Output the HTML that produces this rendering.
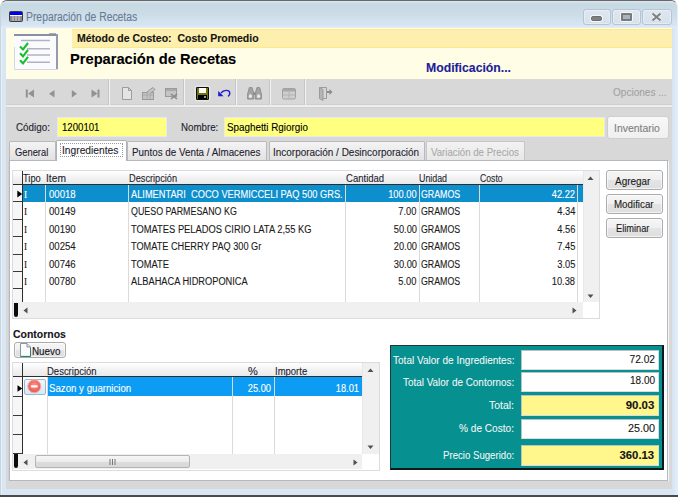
<!DOCTYPE html>
<html><head><meta charset="utf-8">
<style>
*{box-sizing:border-box;margin:0;padding:0}
html,body{width:678px;height:497px;overflow:hidden;background:#fff}
body{position:relative;font-family:"Liberation Sans",sans-serif;font-size:10px;color:#000}
.a{position:absolute}
</style></head><body>
<div class="a" style="left:0;top:0;width:678px;height:497px;background:#d9e7f4;border-radius:7px 7px 0 0;border-top:1px solid #686868;border-left:1px solid #c8d3de;border-right:1px solid #e4eff9"></div>
<div class="a" style="left:1px;top:1px;width:676px;height:27px;border-radius:6px 6px 0 0;background:linear-gradient(#dae6ee,#c6d8e2 12%,#cddde8 50%,#d8e6f3 92%,#e6eef4)"></div>
<div class="a" style="left:1px;top:28px;width:1px;height:467px;background:#e8f0f8"></div>
<div class="a" style="left:672px;top:28px;width:5px;height:467px;background:linear-gradient(90deg,#d6e5f2,#e0ecf8)"></div>
<div class="a" style="left:0px;top:495px;width:678px;height:2px;background:#4a4a4a"></div>
<svg class="a" style="left:8px;top:10px" width="16" height="13" viewBox="0 0 16 13"><rect x="1.5" y="1.5" width="13" height="10" rx="1" fill="#8a8a8a" stroke="#3c3c3c"/><rect x="2" y="2" width="12" height="3" fill="#0000f0"/><rect x="2" y="5" width="12" height="1" fill="#fff"/><path d="M5 6v5M8 6v5M11 6v5" stroke="#d0d0d0"/></svg>
<div class="a" style="left:26.34px;top:11px;font:normal 12.5px/1 'Liberation Sans',sans-serif;color:#667a93;white-space:pre;-webkit-text-stroke:0.1px #667a93;transform:scaleX(0.829);transform-origin:0 0;">Preparación de Recetas</div>
<div class="a" style="left:583px;top:9px;width:28px;height:16px;border:1px solid #b6c3d2;border-radius:3px;background:linear-gradient(#dde7f2,#d6e1ec);box-shadow:inset 0 0 0 1px rgba(255,255,255,.35)"></div>
<div class="a" style="left:612px;top:9px;width:29px;height:16px;border:1px solid #b6c3d2;border-radius:3px;background:linear-gradient(#dde7f2,#d6e1ec);box-shadow:inset 0 0 0 1px rgba(255,255,255,.35)"></div>
<div class="a" style="left:642px;top:9px;width:30px;height:16px;border:1px solid #b6c3d2;border-radius:3px;background:linear-gradient(#dde7f2,#d6e1ec);box-shadow:inset 0 0 0 1px rgba(255,255,255,.35)"></div>
<div class="a" style="left:591px;top:16px;width:11px;height:5px;background:#808080;border-radius:2px;border:1px solid #6e6e6e;box-shadow:0 0 0 1px rgba(255,255,255,.7)"></div>
<div class="a" style="left:621px;top:13px;width:11px;height:8px;border:2px solid #7a7a7a;border-radius:1px;background:#a9b4c2;box-shadow:0 0 0 1px rgba(255,255,255,.7)"></div>
<svg class="a" style="left:650px;top:12px" width="13" height="10" viewBox="0 0 13 10"><path d="M2.5 1.5L10.5 8.5M10.5 1.5L2.5 8.5" stroke="#fff" stroke-opacity=".7" stroke-width="3.6"/><path d="M2.5 1.5L10.5 8.5M10.5 1.5L2.5 8.5" stroke="#808080" stroke-width="2.2"/></svg>
<div class="a" style="left:6px;top:28px;width:666px;height:461px;background:#d8d8d8"></div>
<div class="a" style="left:6px;top:28px;width:666px;height:51px;background:#fffde6"></div>
<div class="a" style="left:72px;top:29px;width:600px;height:19px;background:#fdefad;border-top:1px solid #fde98c;border-bottom:1px solid #fde98c"></div>
<div class="a" style="left:77.03px;top:33px;font:bold 10.5px/1 'Liberation Sans',sans-serif;color:#141414;white-space:pre;-webkit-text-stroke:0.1px #141414;transform:scaleX(1.001);transform-origin:0 0;">Método de Costeo:&nbsp; Costo Promedio</div>
<div class="a" style="left:70.09px;top:51px;font:bold 15.5px/1 'Liberation Sans',sans-serif;color:#000;white-space:pre;-webkit-text-stroke:0.1px #000;transform:scaleX(0.946);transform-origin:0 0;">Preparación de Recetas</div>
<div class="a" style="left:426.37px;top:62px;font:bold 12.5px/1 'Liberation Sans',sans-serif;color:#20209a;white-space:pre;-webkit-text-stroke:0.1px #20209a;transform:scaleX(0.979);transform-origin:0 0;">Modificación...</div>
<svg class="a" style="left:14px;top:33px" width="45" height="37" viewBox="0 0 45 37">
<rect x="0" y="1" width="44" height="36" fill="#fbfbfd"/>
<path d="M0.5 14v22.5h43" fill="none" stroke="#d4d6de"/>
<rect x="0" y="1" width="44" height="2" fill="#8990a2"/>
<rect x="35" y="0" width="7" height="1" fill="#a8aebc"/>
<rect x="42" y="1" width="2" height="35" fill="#959cae"/>
<path d="M7 7.6h29M13 15.8h23M13 22h23M13 29.3h23" stroke="#b2b2c6" stroke-width="1.5"/>
<path d="M6 13.5l3 3 5-6.5M6 20.3l3 3 5-6.5M6 27.3l3 3 5-6.5" stroke="#16c02a" stroke-width="2.1" fill="none"/>
</svg>
<div class="a" style="left:6px;top:79px;width:666px;height:25px;background:#d8d8d8"></div>
<div class="a" style="left:6px;top:104px;width:666px;height:1px;background:#cfcfcf"></div>
<div class="a" style="left:6px;top:105px;width:666px;height:2px;background:#eeeeee"></div>
<div class="a" style="left:6px;top:107px;width:666px;height:1px;background:#d2d2d2"></div>
<div class="a" style="left:108px;top:79px;width:1px;height:26px;background:#c6c6c6"></div>
<div class="a" style="left:109px;top:79px;width:1px;height:26px;background:#f2f2f2"></div>
<div class="a" style="left:183px;top:79px;width:1px;height:26px;background:#c6c6c6"></div>
<div class="a" style="left:184px;top:79px;width:1px;height:26px;background:#f2f2f2"></div>
<div class="a" style="left:235px;top:79px;width:1px;height:26px;background:#c6c6c6"></div>
<div class="a" style="left:236px;top:79px;width:1px;height:26px;background:#f2f2f2"></div>
<div class="a" style="left:269px;top:79px;width:1px;height:26px;background:#c6c6c6"></div>
<div class="a" style="left:270px;top:79px;width:1px;height:26px;background:#f2f2f2"></div>
<div class="a" style="left:304px;top:79px;width:1px;height:26px;background:#c6c6c6"></div>
<div class="a" style="left:305px;top:79px;width:1px;height:26px;background:#f2f2f2"></div>
<div class="a" style="left:613.45px;top:88px;font:normal 10px/1 'Liberation Sans',sans-serif;color:#a2a2a2;white-space:pre;-webkit-text-stroke:0.1px #a2a2a2;transform:scaleX(1.005);transform-origin:0 0;">Opciones ...</div>
<svg class="a" style="left:24px;top:88px" width="80" height="11" viewBox="0 0 80 11"><g fill="#929292">
<rect x="1.8" y="1.5" width="2" height="8"/><path d="M10 1.5v8L4 5.5z"/>
<path d="M30.5 2v7.5L25 5.75z"/>
<path d="M47.8 2v7.5L53 5.75z"/>
<path d="M67.5 1.5v8L73.5 5.5z"/><rect x="73.5" y="1.5" width="2" height="8"/></g></svg>
<svg class="a" style="left:120px;top:86px" width="62" height="15" viewBox="0 0 62 15">
<path d="M2.5 1.5h6l3 3v9h-9z" fill="#e4e4e4" stroke="#9c9c9c"/><path d="M8.5 1.5v3h3" fill="none" stroke="#9c9c9c"/>
<rect x="22.5" y="6.5" width="11" height="7" fill="#c4c4c4" stroke="#9a9a9a"/><path d="M23 9h10M27 7v6M30 7v6" stroke="#aaa"/><path d="M27 6l6-4.5 2 2-5 4" fill="#c8c8c8" stroke="#959595"/>
<rect x="45.5" y="2.5" width="11" height="8" fill="#c4c4c4" stroke="#9a9a9a"/><rect x="46" y="3" width="10" height="2" fill="#aaa"/><path d="M51 8l6 5M57 8l-6 5" stroke="#8a8a8a" stroke-width="1.6"/>
</svg>
<svg class="a" style="left:194px;top:85px" width="17" height="17" viewBox="0 0 17 17">
<rect x="0.5" y="0.5" width="16" height="16" rx="3" fill="#ececec" opacity=".7"/>
<rect x="2" y="2" width="13" height="13" rx="1.2" fill="#0c0c0c"/><rect x="3" y="3" width="11" height="11" fill="#74740c"/>
<rect x="5" y="3" width="7" height="5" fill="#fff"/><rect x="4" y="10" width="9" height="4" fill="#000"/><rect x="10" y="11" width="2" height="2" fill="#9a9a9a"/></svg>
<svg class="a" style="left:217px;top:88px" width="15" height="10" viewBox="0 0 15 10">
<path d="M4 5C6.5 1.8 12.3 1.3 12.8 5c0.2 1.8-0.8 2.8-1.8 3.3" stroke="#1b1bd0" stroke-width="1.4" fill="none"/><path d="M1.2 3L6.5 8.2H1.2z" fill="#1b1bd0"/></svg>
<svg class="a" style="left:247px;top:87px" width="15" height="13" viewBox="0 0 15 13">
<g fill="#a4a4a4" stroke="#858585" stroke-width="0.8">
<path d="M2.3 0.6h2.8l1.6 5.6v5.9H0.6V7z"/><path d="M12.7 0.6H9.9L8.3 6.2v5.9h6.1V7z"/></g>
<rect x="6.5" y="5.5" width="2" height="2.5" fill="#8a8a8a"/>
<ellipse cx="3.4" cy="9.2" rx="1.6" ry="1.9" fill="#e8e8e8"/><ellipse cx="11.6" cy="9.2" rx="1.6" ry="1.9" fill="#e8e8e8"/>
</svg>
<svg class="a" style="left:281px;top:87px" width="16" height="13" viewBox="0 0 16 13">
<rect x="1.5" y="1.5" width="13" height="10.5" rx="1.5" fill="#cecece" stroke="#a2a2a2"/><rect x="2" y="2" width="12" height="2.5" fill="#a8a8a8"/><path d="M8 5v6.5M2 8h12" stroke="#b4b4b4"/></svg>
<svg class="a" style="left:317px;top:86px" width="17" height="15" viewBox="0 0 17 15">
<path d="M2.5 1.5h7v11h-7z" fill="#d6d6d6" stroke="#9c9c9c"/><path d="M2.5 1.5l3.5 2v11l-3.5-2z" fill="#b4b4b4" stroke="#9c9c9c"/><path d="M10 6h3" stroke="#8a8a8a" stroke-width="2"/><path d="M12.5 3l3 3-3 3z" fill="#8a8a8a"/></svg>
<div class="a" style="left:16.26px;top:123px;font:normal 10px/1 'Liberation Sans',sans-serif;color:#1e1e2e;white-space:pre;-webkit-text-stroke:0.1px #1e1e2e;transform:scaleX(0.983);transform-origin:0 0;">Código:</div>
<div class="a" style="left:57px;top:117px;width:110px;height:20px;background:#ffff80;border:1px solid #e8e8f0"></div>
<div class="a" style="left:62.06px;top:123px;font:normal 10px/1 'Liberation Sans',sans-serif;color:#000;white-space:pre;-webkit-text-stroke:0.1px #000;transform:scaleX(0.962);transform-origin:0 0;">1200101</div>
<div class="a" style="left:181.46px;top:123px;font:normal 10px/1 'Liberation Sans',sans-serif;color:#1e1e2e;white-space:pre;-webkit-text-stroke:0.1px #1e1e2e;transform:scaleX(0.972);transform-origin:0 0;">Nombre:</div>
<div class="a" style="left:224px;top:117px;width:381px;height:20px;background:#ffff80;border:1px solid #e8e8f0"></div>
<div class="a" style="left:227.46px;top:123px;font:normal 10px/1 'Liberation Sans',sans-serif;color:#000;white-space:pre;-webkit-text-stroke:0.1px #000;transform:scaleX(0.983);transform-origin:0 0;">Spaghetti Rgiorgio</div>
<div class="a" style="left:607px;top:116px;width:62px;height:23px;background:linear-gradient(#f8f8f8,#efefef);border:1px solid #cfcfcf;border-radius:3px"></div>
<div class="a" style="left:9px;top:160px;width:659px;height:321px;background:#fff;border:1px solid #b4b8c0"></div>
<div class="a" style="left:8px;top:161px;width:1px;height:320px;background:#cfd0d4"></div>
<div class="a" style="left:668px;top:161px;width:1px;height:320px;background:#f4f6f8"></div>
<div class="a" style="left:9px;top:141px;width:47px;height:19px;background:linear-gradient(#f4f4f4,#e2e2e2);border:1px solid #b9b9bd;border-bottom:none;border-radius:2px 2px 0 0"></div>
<div class="a" style="left:127px;top:141px;width:140px;height:19px;background:linear-gradient(#f4f4f4,#e2e2e2);border:1px solid #b9b9bd;border-bottom:none;border-radius:2px 2px 0 0"></div>
<div class="a" style="left:269px;top:141px;width:156px;height:19px;background:linear-gradient(#f4f4f4,#e2e2e2);border:1px solid #b9b9bd;border-bottom:none;border-radius:2px 2px 0 0"></div>
<div class="a" style="left:426px;top:141px;width:99px;height:19px;background:linear-gradient(#f2f2f2,#e8e8e8);border:1px solid #c6c6c8;border-bottom:none;border-radius:2px 2px 0 0"></div>
<div class="a" style="left:56px;top:140px;width:71px;height:21px;background:#fff;border:1px solid #aeb2ba;border-bottom:none;border-radius:2px 2px 0 0"></div>
<div class="a" style="left:60px;top:143px;width:63px;height:14px;border:1px dotted #9a9a9a"></div>
<div class="a" style="left:613.63px;top:124px;font:normal 10px/1 'Liberation Sans',sans-serif;color:#808080;white-space:pre;-webkit-text-stroke:0.1px #808080;transform:scaleX(1.046);transform-origin:0 0;">Inventario</div>
<div class="a" style="left:15.17px;top:148px;font:normal 10px/1 'Liberation Sans',sans-serif;color:#1e1e2e;white-space:pre;-webkit-text-stroke:0.1px #1e1e2e;transform:scaleX(0.935);transform-origin:0 0;">General</div>
<div class="a" style="left:62.14px;top:146px;font:normal 10px/1 'Liberation Sans',sans-serif;color:#1e1e2e;white-space:pre;-webkit-text-stroke:0.1px #1e1e2e;transform:scaleX(1.023);transform-origin:0 0;">Ingredientes</div>
<div class="a" style="left:131.56px;top:148px;font:normal 10px/1 'Liberation Sans',sans-serif;color:#1e1e2e;white-space:pre;-webkit-text-stroke:0.1px #1e1e2e;transform:scaleX(0.982);transform-origin:0 0;">Puntos de Venta / Almacenes</div>
<div class="a" style="left:273.45px;top:148px;font:normal 10px/1 'Liberation Sans',sans-serif;color:#1e1e2e;white-space:pre;-webkit-text-stroke:0.1px #1e1e2e;transform:scaleX(0.996);transform-origin:0 0;">Incorporación / Desincorporación</div>
<div class="a" style="left:430.66px;top:148px;font:normal 10px/1 'Liberation Sans',sans-serif;color:#a9a9a9;white-space:pre;-webkit-text-stroke:0.1px #a9a9a9;transform:scaleX(0.966);transform-origin:0 0;">Variación de Precios</div>
<div class="a" style="left:12px;top:170px;width:588px;height:149px;background:#fff;border:1px solid #dcdce0"></div>
<div class="a" style="left:13px;top:171px;width:571px;height:13px;background:linear-gradient(#ffffff,#f3f3f3 50%,#e9e9e9)"></div>
<div class="a" style="left:13px;top:184px;width:571px;height:1px;background:#2e2e2e"></div>
<div class="a" style="left:13px;top:185px;width:9px;height:117px;background:#f6f6f6"></div>
<div class="a" style="left:22px;top:171px;width:1px;height:131px;background:#2e2e2e"></div>
<div class="a" style="left:13px;top:201px;width:9px;height:1px;background:#3a3a3a"></div>
<div class="a" style="left:13px;top:219px;width:9px;height:1px;background:#3a3a3a"></div>
<div class="a" style="left:13px;top:236px;width:9px;height:1px;background:#3a3a3a"></div>
<div class="a" style="left:13px;top:254px;width:9px;height:1px;background:#3a3a3a"></div>
<div class="a" style="left:13px;top:271px;width:9px;height:1px;background:#3a3a3a"></div>
<div class="a" style="left:13px;top:288px;width:9px;height:1px;background:#3a3a3a"></div>
<div class="a" style="left:23px;top:185px;width:560px;height:17px;background:#0d8fcd"></div>
<div class="a" style="left:45px;top:185px;width:1px;height:117px;background:#dadada"></div>
<div class="a" style="left:128px;top:185px;width:1px;height:117px;background:#dadada"></div>
<div class="a" style="left:345px;top:185px;width:1px;height:117px;background:#dadada"></div>
<div class="a" style="left:419px;top:185px;width:1px;height:117px;background:#dadada"></div>
<div class="a" style="left:479px;top:185px;width:1px;height:117px;background:#dadada"></div>
<div class="a" style="left:577px;top:185px;width:1px;height:117px;background:#dadada"></div>
<svg class="a" style="left:17px;top:190px" width="6" height="8"><path d="M0.3 0.5L5.2 4L0.3 7.5z" fill="#000"/></svg>
<div class="a" style="left:23.17px;top:174px;font:normal 10px/1 'Liberation Sans',sans-serif;color:#1e1e2e;white-space:pre;-webkit-text-stroke:0.1px #1e1e2e;transform:scaleX(0.930);transform-origin:0 0;">Tipo</div>
<div class="a" style="left:45.84px;top:174px;font:normal 10px/1 'Liberation Sans',sans-serif;color:#1e1e2e;white-space:pre;-webkit-text-stroke:0.1px #1e1e2e;transform:scaleX(1.024);transform-origin:0 0;">Item</div>
<div class="a" style="left:129.18px;top:174px;font:normal 10px/1 'Liberation Sans',sans-serif;color:#1e1e2e;white-space:pre;-webkit-text-stroke:0.1px #1e1e2e;transform:scaleX(0.921);transform-origin:0 0;">Descripción</div>
<div class="a" style="left:346.17px;top:174px;font:normal 10px/1 'Liberation Sans',sans-serif;color:#1e1e2e;white-space:pre;-webkit-text-stroke:0.1px #1e1e2e;transform:scaleX(0.953);transform-origin:0 0;">Cantidad</div>
<div class="a" style="left:419.29px;top:174px;font:normal 10px/1 'Liberation Sans',sans-serif;color:#1e1e2e;white-space:pre;-webkit-text-stroke:0.1px #1e1e2e;transform:scaleX(0.884);transform-origin:0 0;">Unidad</div>
<div class="a" style="left:479.70px;top:174px;font:normal 10px/1 'Liberation Sans',sans-serif;color:#1e1e2e;white-space:pre;-webkit-text-stroke:0.1px #1e1e2e;transform:scaleX(0.865);transform-origin:0 0;">Costo</div>
<div class="a" style="left:24.17px;top:190px;font:normal 10px/1 'Liberation Sans',sans-serif;color:#fff;white-space:pre;-webkit-text-stroke:0.1px #fff;transform:scaleX(0.930);transform-origin:0 0;font-family:'Liberation Serif',serif">I</div>
<div class="a" style="left:48.56px;top:190px;font:normal 10px/1 'Liberation Sans',sans-serif;color:#fff;white-space:pre;-webkit-text-stroke:0.1px #fff;transform:scaleX(0.959);transform-origin:0 0;">00018</div>
<div class="a" style="left:130.78px;top:190px;font:normal 10px/1 'Liberation Sans',sans-serif;color:#fff;white-space:pre;-webkit-text-stroke:0.1px #fff;transform:scaleX(0.926);transform-origin:0 0;">ALIMENTARI&nbsp; COCO VERMICCELI PAQ 500 GRS.</div>
<div class="a" style="right:261.37px;top:190px;font:normal 10px/1 'Liberation Sans',sans-serif;color:#fff;white-space:pre;-webkit-text-stroke:0.1px #fff;transform:scaleX(0.930);transform-origin:100% 0;">100.00</div>
<div class="a" style="left:421.19px;top:190px;font:normal 10px/1 'Liberation Sans',sans-serif;color:#fff;white-space:pre;-webkit-text-stroke:0.1px #fff;transform:scaleX(0.882);transform-origin:0 0;">GRAMOS</div>
<div class="a" style="right:102.97px;top:190px;font:normal 10px/1 'Liberation Sans',sans-serif;color:#fff;white-space:pre;-webkit-text-stroke:0.1px #fff;transform:scaleX(0.930);transform-origin:100% 0;">42.22</div>
<div class="a" style="left:24.17px;top:207px;font:normal 10px/1 'Liberation Sans',sans-serif;color:#1a1a1a;white-space:pre;-webkit-text-stroke:0.1px #1a1a1a;transform:scaleX(0.930);transform-origin:0 0;font-family:'Liberation Serif',serif">I</div>
<div class="a" style="left:48.56px;top:207px;font:normal 10px/1 'Liberation Sans',sans-serif;color:#1a1a1a;white-space:pre;-webkit-text-stroke:0.1px #1a1a1a;transform:scaleX(0.959);transform-origin:0 0;">00149</div>
<div class="a" style="left:130.79px;top:207px;font:normal 10px/1 'Liberation Sans',sans-serif;color:#1a1a1a;white-space:pre;-webkit-text-stroke:0.1px #1a1a1a;transform:scaleX(0.887);transform-origin:0 0;">QUESO PARMESANO KG</div>
<div class="a" style="right:261.37px;top:207px;font:normal 10px/1 'Liberation Sans',sans-serif;color:#1a1a1a;white-space:pre;-webkit-text-stroke:0.1px #1a1a1a;transform:scaleX(0.930);transform-origin:100% 0;">7.00</div>
<div class="a" style="left:421.19px;top:207px;font:normal 10px/1 'Liberation Sans',sans-serif;color:#1a1a1a;white-space:pre;-webkit-text-stroke:0.1px #1a1a1a;transform:scaleX(0.882);transform-origin:0 0;">GRAMOS</div>
<div class="a" style="right:102.97px;top:207px;font:normal 10px/1 'Liberation Sans',sans-serif;color:#1a1a1a;white-space:pre;-webkit-text-stroke:0.1px #1a1a1a;transform:scaleX(0.930);transform-origin:100% 0;">4.34</div>
<div class="a" style="left:24.17px;top:225px;font:normal 10px/1 'Liberation Sans',sans-serif;color:#1a1a1a;white-space:pre;-webkit-text-stroke:0.1px #1a1a1a;transform:scaleX(0.930);transform-origin:0 0;font-family:'Liberation Serif',serif">I</div>
<div class="a" style="left:48.56px;top:225px;font:normal 10px/1 'Liberation Sans',sans-serif;color:#1a1a1a;white-space:pre;-webkit-text-stroke:0.1px #1a1a1a;transform:scaleX(0.959);transform-origin:0 0;">00190</div>
<div class="a" style="left:130.77px;top:225px;font:normal 10px/1 'Liberation Sans',sans-serif;color:#1a1a1a;white-space:pre;-webkit-text-stroke:0.1px #1a1a1a;transform:scaleX(0.934);transform-origin:0 0;">TOMATES PELADOS CIRIO LATA 2,55 KG</div>
<div class="a" style="right:261.37px;top:225px;font:normal 10px/1 'Liberation Sans',sans-serif;color:#1a1a1a;white-space:pre;-webkit-text-stroke:0.1px #1a1a1a;transform:scaleX(0.930);transform-origin:100% 0;">50.00</div>
<div class="a" style="left:421.19px;top:225px;font:normal 10px/1 'Liberation Sans',sans-serif;color:#1a1a1a;white-space:pre;-webkit-text-stroke:0.1px #1a1a1a;transform:scaleX(0.882);transform-origin:0 0;">GRAMOS</div>
<div class="a" style="right:102.97px;top:225px;font:normal 10px/1 'Liberation Sans',sans-serif;color:#1a1a1a;white-space:pre;-webkit-text-stroke:0.1px #1a1a1a;transform:scaleX(0.930);transform-origin:100% 0;">4.56</div>
<div class="a" style="left:24.17px;top:242px;font:normal 10px/1 'Liberation Sans',sans-serif;color:#1a1a1a;white-space:pre;-webkit-text-stroke:0.1px #1a1a1a;transform:scaleX(0.930);transform-origin:0 0;font-family:'Liberation Serif',serif">I</div>
<div class="a" style="left:48.56px;top:242px;font:normal 10px/1 'Liberation Sans',sans-serif;color:#1a1a1a;white-space:pre;-webkit-text-stroke:0.1px #1a1a1a;transform:scaleX(0.959);transform-origin:0 0;">00254</div>
<div class="a" style="left:130.78px;top:242px;font:normal 10px/1 'Liberation Sans',sans-serif;color:#1a1a1a;white-space:pre;-webkit-text-stroke:0.1px #1a1a1a;transform:scaleX(0.918);transform-origin:0 0;">TOMATE CHERRY PAQ 300 Gr</div>
<div class="a" style="right:261.37px;top:242px;font:normal 10px/1 'Liberation Sans',sans-serif;color:#1a1a1a;white-space:pre;-webkit-text-stroke:0.1px #1a1a1a;transform:scaleX(0.930);transform-origin:100% 0;">20.00</div>
<div class="a" style="left:421.19px;top:242px;font:normal 10px/1 'Liberation Sans',sans-serif;color:#1a1a1a;white-space:pre;-webkit-text-stroke:0.1px #1a1a1a;transform:scaleX(0.882);transform-origin:0 0;">GRAMOS</div>
<div class="a" style="right:102.97px;top:242px;font:normal 10px/1 'Liberation Sans',sans-serif;color:#1a1a1a;white-space:pre;-webkit-text-stroke:0.1px #1a1a1a;transform:scaleX(0.930);transform-origin:100% 0;">7.45</div>
<div class="a" style="left:24.17px;top:260px;font:normal 10px/1 'Liberation Sans',sans-serif;color:#1a1a1a;white-space:pre;-webkit-text-stroke:0.1px #1a1a1a;transform:scaleX(0.930);transform-origin:0 0;font-family:'Liberation Serif',serif">I</div>
<div class="a" style="left:48.56px;top:260px;font:normal 10px/1 'Liberation Sans',sans-serif;color:#1a1a1a;white-space:pre;-webkit-text-stroke:0.1px #1a1a1a;transform:scaleX(0.959);transform-origin:0 0;">00746</div>
<div class="a" style="left:130.77px;top:260px;font:normal 10px/1 'Liberation Sans',sans-serif;color:#1a1a1a;white-space:pre;-webkit-text-stroke:0.1px #1a1a1a;transform:scaleX(0.931);transform-origin:0 0;">TOMATE</div>
<div class="a" style="right:261.37px;top:260px;font:normal 10px/1 'Liberation Sans',sans-serif;color:#1a1a1a;white-space:pre;-webkit-text-stroke:0.1px #1a1a1a;transform:scaleX(0.930);transform-origin:100% 0;">30.00</div>
<div class="a" style="left:421.19px;top:260px;font:normal 10px/1 'Liberation Sans',sans-serif;color:#1a1a1a;white-space:pre;-webkit-text-stroke:0.1px #1a1a1a;transform:scaleX(0.882);transform-origin:0 0;">GRAMOS</div>
<div class="a" style="right:102.97px;top:260px;font:normal 10px/1 'Liberation Sans',sans-serif;color:#1a1a1a;white-space:pre;-webkit-text-stroke:0.1px #1a1a1a;transform:scaleX(0.930);transform-origin:100% 0;">3.05</div>
<div class="a" style="left:24.17px;top:277px;font:normal 10px/1 'Liberation Sans',sans-serif;color:#1a1a1a;white-space:pre;-webkit-text-stroke:0.1px #1a1a1a;transform:scaleX(0.930);transform-origin:0 0;font-family:'Liberation Serif',serif">I</div>
<div class="a" style="left:48.56px;top:277px;font:normal 10px/1 'Liberation Sans',sans-serif;color:#1a1a1a;white-space:pre;-webkit-text-stroke:0.1px #1a1a1a;transform:scaleX(0.959);transform-origin:0 0;">00780</div>
<div class="a" style="left:130.78px;top:277px;font:normal 10px/1 'Liberation Sans',sans-serif;color:#1a1a1a;white-space:pre;-webkit-text-stroke:0.1px #1a1a1a;transform:scaleX(0.925);transform-origin:0 0;">ALBAHACA HIDROPONICA</div>
<div class="a" style="right:261.37px;top:277px;font:normal 10px/1 'Liberation Sans',sans-serif;color:#1a1a1a;white-space:pre;-webkit-text-stroke:0.1px #1a1a1a;transform:scaleX(0.930);transform-origin:100% 0;">5.00</div>
<div class="a" style="left:421.19px;top:277px;font:normal 10px/1 'Liberation Sans',sans-serif;color:#1a1a1a;white-space:pre;-webkit-text-stroke:0.1px #1a1a1a;transform:scaleX(0.882);transform-origin:0 0;">GRAMOS</div>
<div class="a" style="right:102.97px;top:277px;font:normal 10px/1 'Liberation Sans',sans-serif;color:#1a1a1a;white-space:pre;-webkit-text-stroke:0.1px #1a1a1a;transform:scaleX(0.930);transform-origin:100% 0;">10.38</div>
<div class="a" style="left:583px;top:171px;width:16px;height:131px;background:#f0f0f0;border-left:1px solid #e8e8e8"></div>
<svg class="a" style="left:587px;top:176px" width="7" height="5"><path d="M0.5 4L3.5 0.5L6.5 4z" fill="#505050"/></svg>
<svg class="a" style="left:587px;top:294px" width="7" height="5"><path d="M0.5 0.5L3.5 4L6.5 0.5z" fill="#505050"/></svg>
<div class="a" style="left:13px;top:302px;width:570px;height:16px;background:#f0f0f0"></div>
<div class="a" style="left:583px;top:302px;width:16px;height:16px;background:#fff"></div>
<div class="a" style="left:14px;top:303px;width:4px;height:14px;background:#0c0c0c;border-radius:0 0 2px 2px"></div>
<svg class="a" style="left:23px;top:307px" width="5" height="7"><path d="M4.5 0.5L0.5 3.5L4.5 6.5z" fill="#505050"/></svg>
<svg class="a" style="left:572px;top:307px" width="5" height="7"><path d="M0.5 0.5L4.5 3.5L0.5 6.5z" fill="#505050"/></svg>
<div class="a" style="left:606px;top:170px;width:57px;height:20px;border:1px solid #acacac;border-radius:3px;background:linear-gradient(#f6f6f6,#efefef 50%,#e4e4e4 51%,#dedede);box-shadow:inset 0 0 0 1px rgba(255,255,255,.6)"></div>
<div class="a" style="left:615.45px;top:177px;font:normal 10px/1 'Liberation Sans',sans-serif;color:#1a1a1a;white-space:pre;-webkit-text-stroke:0.1px #1a1a1a;transform:scaleX(0.995);transform-origin:0 0;">Agregar</div>
<div class="a" style="left:606px;top:194px;width:57px;height:20px;border:1px solid #acacac;border-radius:3px;background:linear-gradient(#f6f6f6,#efefef 50%,#e4e4e4 51%,#dedede);box-shadow:inset 0 0 0 1px rgba(255,255,255,.6)"></div>
<div class="a" style="left:613.56px;top:200px;font:normal 10px/1 'Liberation Sans',sans-serif;color:#1a1a1a;white-space:pre;-webkit-text-stroke:0.1px #1a1a1a;transform:scaleX(0.975);transform-origin:0 0;">Modificar</div>
<div class="a" style="left:606px;top:218px;width:57px;height:20px;border:1px solid #acacac;border-radius:3px;background:linear-gradient(#f6f6f6,#efefef 50%,#e4e4e4 51%,#dedede);box-shadow:inset 0 0 0 1px rgba(255,255,255,.6)"></div>
<div class="a" style="left:615.98px;top:224px;font:normal 10px/1 'Liberation Sans',sans-serif;color:#1a1a1a;white-space:pre;-webkit-text-stroke:0.1px #1a1a1a;transform:scaleX(0.923);transform-origin:0 0;">Eliminar</div>
<div class="a" style="left:12.83px;top:330px;font:bold 10px/1 'Liberation Sans',sans-serif;color:#141420;white-space:pre;-webkit-text-stroke:0.1px #141420;transform:scaleX(1.045);transform-origin:0 0;">Contornos</div>
<div class="a" style="left:14px;top:342px;width:52px;height:16px;border:1px solid #acacac;border-radius:3px;background:linear-gradient(#f6f6f6,#efefef 50%,#e4e4e4 51%,#dedede);box-shadow:inset 0 0 0 1px rgba(255,255,255,.6)"></div>
<svg class="a" style="left:20px;top:343px" width="11" height="14" viewBox="0 0 11 14">
<path d="M0.5 0.5h6.5l3.5 3.5v9.5h-10z" fill="#fbfbfb" stroke="#8a94a4"/><path d="M7 0.5v3.5h3.5" fill="#dde" stroke="#8a94a4"/>
<path d="M0.5 13.5h10" stroke="#1e8a6e" stroke-width="1.2"/><path d="M10.5 5v8.5" stroke="#3a7a6a"/></svg>
<div class="a" style="left:31.96px;top:347px;font:normal 10px/1 'Liberation Sans',sans-serif;color:#141420;white-space:pre;-webkit-text-stroke:0.1px #141420;transform:scaleX(0.986);transform-origin:0 0;">Nuevo</div>
<div class="a" style="left:12px;top:362px;width:368px;height:109px;background:#fff;border:1px solid #dcdce0"></div>
<div class="a" style="left:13px;top:363px;width:349px;height:13px;background:linear-gradient(#ffffff,#f3f3f3 50%,#e9e9e9)"></div>
<div class="a" style="left:13px;top:376px;width:349px;height:1px;background:#2e2e2e"></div>
<div class="a" style="left:13px;top:377px;width:9px;height:77px;background:#f6f6f6"></div>
<div class="a" style="left:22px;top:363px;width:1px;height:91px;background:#2e2e2e"></div>
<div class="a" style="left:13px;top:396px;width:9px;height:1px;background:#3a3a3a"></div>
<div class="a" style="left:13px;top:415px;width:9px;height:1px;background:#3a3a3a"></div>
<div class="a" style="left:13px;top:434px;width:9px;height:1px;background:#3a3a3a"></div>
<div class="a" style="left:13px;top:453px;width:9px;height:1px;background:#3a3a3a"></div>
<div class="a" style="left:47px;top:377px;width:315px;height:19px;background:#0c9cf4"></div>
<div class="a" style="left:47px;top:377px;width:1px;height:77px;background:#dadada"></div>
<div class="a" style="left:232px;top:377px;width:1px;height:77px;background:#dadada"></div>
<div class="a" style="left:274px;top:377px;width:1px;height:77px;background:#dadada"></div>
<svg class="a" style="left:17px;top:385px" width="6" height="7"><path d="M0.5 0.3L5.3 3.5L0.5 6.7z" fill="#000"/></svg>
<div class="a" style="left:24px;top:379px;width:22px;height:16px;border:1px solid #9cb8d0;border-radius:2px;background:linear-gradient(#f0f7fd,#d4e8f6)"></div>
<svg class="a" style="left:27px;top:379px" width="15" height="15" viewBox="0 0 15 15"><defs><radialGradient id="rg" cx=".5" cy=".4" r=".6"><stop offset="0" stop-color="#ff8c84"/><stop offset="1" stop-color="#ea5650"/></radialGradient></defs><circle cx="7.3" cy="7.3" r="6.5" fill="url(#rg)" stroke="#f0b0a8" stroke-width="1"/><rect x="3.8" y="6.2" width="7" height="2.4" rx="1" fill="#fff"/></svg>
<div class="a" style="left:46.77px;top:367px;font:normal 10px/1 'Liberation Sans',sans-serif;color:#1e1e2e;white-space:pre;-webkit-text-stroke:0.1px #1e1e2e;transform:scaleX(0.949);transform-origin:0 0;">Descripción</div>
<div class="a" style="left:247.62px;top:367px;font:normal 10px/1 'Liberation Sans',sans-serif;color:#1e1e2e;white-space:pre;-webkit-text-stroke:0.1px #1e1e2e;transform:scaleX(1.097);transform-origin:0 0;">%</div>
<div class="a" style="left:275.17px;top:367px;font:normal 10px/1 'Liberation Sans',sans-serif;color:#1e1e2e;white-space:pre;-webkit-text-stroke:0.1px #1e1e2e;transform:scaleX(0.949);transform-origin:0 0;">Importe</div>
<div class="a" style="left:48.76px;top:384px;font:normal 10px/1 'Liberation Sans',sans-serif;color:#fff;white-space:pre;-webkit-text-stroke:0.1px #fff;transform:scaleX(0.967);transform-origin:0 0;">Sazon y guarnicion</div>
<div class="a" style="right:407.17px;top:384px;font:normal 10px/1 'Liberation Sans',sans-serif;color:#fff;white-space:pre;-webkit-text-stroke:0.1px #fff;transform:scaleX(0.930);transform-origin:100% 0;">25.00</div>
<div class="a" style="right:319.17px;top:384px;font:normal 10px/1 'Liberation Sans',sans-serif;color:#fff;white-space:pre;-webkit-text-stroke:0.1px #fff;transform:scaleX(0.930);transform-origin:100% 0;">18.01</div>
<div class="a" style="left:362px;top:363px;width:17px;height:91px;background:#f0f0f0;border-left:1px solid #e8e8e8"></div>
<svg class="a" style="left:367px;top:368px" width="7" height="5"><path d="M0.5 4L3.5 0.5L6.5 4z" fill="#505050"/></svg>
<svg class="a" style="left:367px;top:445px" width="7" height="5"><path d="M0.5 0.5L3.5 4L6.5 0.5z" fill="#505050"/></svg>
<div class="a" style="left:13px;top:454px;width:349px;height:15px;background:#f0f0f0"></div>
<div class="a" style="left:362px;top:454px;width:17px;height:15px;background:#fff"></div>
<div class="a" style="left:14px;top:454px;width:4px;height:14px;background:#0c0c0c;border-radius:0 0 2px 2px"></div>
<svg class="a" style="left:23px;top:459px" width="5" height="7"><path d="M4.5 0.5L0.5 3.5L4.5 6.5z" fill="#505050"/></svg>
<div class="a" style="left:35px;top:455px;width:155px;height:13px;border:1px solid #b4b4b4;border-radius:2px;background:linear-gradient(#f6f6f6,#ececec 50%,#dcdcdc 51%,#d8d8d8)"></div>
<svg class="a" style="left:109px;top:459px" width="7" height="6"><path d="M1 0v6M3.5 0v6M6 0v6" stroke="#777"/></svg>
<svg class="a" style="left:353px;top:459px" width="5" height="7"><path d="M0.5 0.5L4.5 3.5L0.5 6.5z" fill="#505050"/></svg>
<div class="a" style="left:390px;top:345px;width:274px;height:125px;background:#079090;border-top:1px solid #203838;border-left:1px solid #203838;border-right:2px solid #0a1a1a;border-bottom:2px solid #0a1a1a"></div>
<div class="a" style="left:521px;top:350px;width:138px;height:20px;background:#fff;border:1px solid #d8dcdc;border-top-color:#b8c0c0;border-left-color:#b8c0c0"></div>
<div class="a" style="left:392.85px;top:356px;font:normal 10px/1 'Liberation Sans',sans-serif;color:#f4f8f8;white-space:pre;-webkit-text-stroke:0.1px #f4f8f8;transform:scaleX(1.004);transform-origin:0 0;-webkit-text-stroke:0.05px #fff">Total Valor de Ingredientes:</div>
<div class="a" style="right:23.44px;top:355px;font:normal 10px/1 'Liberation Sans',sans-serif;color:#141414;white-space:pre;-webkit-text-stroke:0.1px #141414;transform:scaleX(1.019);transform-origin:100% 0;">72.02</div>
<div class="a" style="left:521px;top:372px;width:138px;height:20px;background:#fff;border:1px solid #d8dcdc;border-top-color:#b8c0c0;border-left-color:#b8c0c0"></div>
<div class="a" style="left:403.15px;top:378px;font:normal 10px/1 'Liberation Sans',sans-serif;color:#f4f8f8;white-space:pre;-webkit-text-stroke:0.1px #f4f8f8;transform:scaleX(0.992);transform-origin:0 0;-webkit-text-stroke:0.05px #fff">Total Valor de Contornos:</div>
<div class="a" style="right:23.45px;top:376px;font:normal 10px/1 'Liberation Sans',sans-serif;color:#141414;white-space:pre;-webkit-text-stroke:0.1px #141414;transform:scaleX(0.999);transform-origin:100% 0;">18.00</div>
<div class="a" style="left:521px;top:395px;width:138px;height:21px;background:#fff68c;border:1px solid #d8dcdc;border-top-color:#b8c0c0;border-left-color:#b8c0c0"></div>
<div class="a" style="left:489.44px;top:401px;font:normal 10px/1 'Liberation Sans',sans-serif;color:#f4f8f8;white-space:pre;-webkit-text-stroke:0.1px #f4f8f8;transform:scaleX(1.043);transform-origin:0 0;-webkit-text-stroke:0.05px #fff">Total:</div>
<div class="a" style="right:23.40px;top:400px;font:bold 10.5px/1 'Liberation Sans',sans-serif;color:#141414;white-space:pre;-webkit-text-stroke:0.1px #141414;transform:scaleX(1.088);transform-origin:100% 0;">90.03</div>
<div class="a" style="left:521px;top:419px;width:138px;height:20px;background:#fff;border:1px solid #d8dcdc;border-top-color:#b8c0c0;border-left-color:#b8c0c0"></div>
<div class="a" style="left:459.35px;top:424px;font:normal 10px/1 'Liberation Sans',sans-serif;color:#f4f8f8;white-space:pre;-webkit-text-stroke:0.1px #f4f8f8;transform:scaleX(1.010);transform-origin:0 0;-webkit-text-stroke:0.05px #fff">% de Costo:</div>
<div class="a" style="right:23.42px;top:424px;font:normal 10px/1 'Liberation Sans',sans-serif;color:#141414;white-space:pre;-webkit-text-stroke:0.1px #141414;transform:scaleX(1.081);transform-origin:100% 0;">25.00</div>
<div class="a" style="left:521px;top:445px;width:138px;height:21px;background:#fff68c;border:1px solid #d8dcdc;border-top-color:#b8c0c0;border-left-color:#b8c0c0"></div>
<div class="a" style="left:443.16px;top:451px;font:normal 10px/1 'Liberation Sans',sans-serif;color:#f4f8f8;white-space:pre;-webkit-text-stroke:0.1px #f4f8f8;transform:scaleX(0.963);transform-origin:0 0;-webkit-text-stroke:0.05px #fff">Precio Sugerido:</div>
<div class="a" style="right:23.40px;top:450px;font:bold 10.5px/1 'Liberation Sans',sans-serif;color:#141414;white-space:pre;-webkit-text-stroke:0.1px #141414;transform:scaleX(1.077);transform-origin:100% 0;">360.13</div>
</body></html>
